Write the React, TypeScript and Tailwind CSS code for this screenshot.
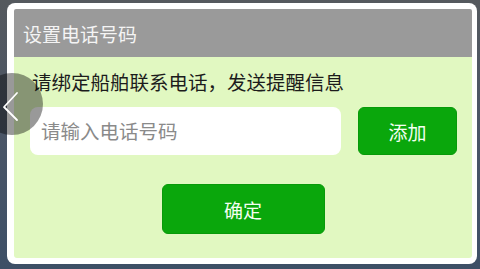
const cjk = { fontFamily: '"Noto Sans CJK SC", "Noto Sans", sans-serif' };

export default function App() {
    return (
        <div
            className="relative w-[480px] h-[269px] overflow-hidden bg-gradient-to-b from-[#55595e] via-[#4a5566] to-[#3d4f66] pt-[3px] pl-[7px]"
            style={cjk}
        >
            {/* Dialog */}
            <div className="w-[470px] h-[261px] bg-white rounded-[8px] pt-[6px] pl-[7px] pr-[5px] pb-[6px] flex flex-col">
                {/* Header */}
                <div className="h-[48px] bg-[#9a9a9a] flex items-center pl-[9px] rounded-t-[2px]">
                    <span className="text-[19px] leading-none text-[#f4f4f4]">设置电话号码</span>
                </div>

                {/* Body */}
                <div className="flex-1 bg-[#e1f8c1] rounded-b-[3px] flex flex-col pt-[13px]">
                    <div className="pl-[18px] text-[19.5px] leading-[24px] text-[#1c1c1c]">
                        请绑定船舶联系电话，发送提醒信息
                    </div>

                    <div className="flex items-center gap-[17px] pl-[16px] mt-[13px] h-[48px]">
                        <div className="w-[311px] h-[48px] bg-white rounded-[8px] flex items-center pl-[11px]">
                            <span className="text-[19.5px] leading-none text-[#8a8a8a]">请输入电话号码</span>
                        </div>
                        <button className="w-[99px] h-[48px] bg-[#0aa70c] border border-[#089a0a] rounded-[6px] text-[19px] leading-none text-[#f4fff2]">
                            添加
                        </button>
                    </div>

                    <div className="flex justify-center mt-[29px]">
                        <button className="w-[163px] h-[50px] bg-[#0aa70c] border border-[#089a0a] rounded-[6px] text-[19px] leading-none text-[#f4fff2]">
                            确定
                        </button>
                    </div>
                </div>
            </div>

            {/* Back overlay on the left edge */}
            <div className="absolute left-[-19px] top-[73px] w-[62px] h-[62px] rounded-full bg-black/40">
                <svg width="62" height="62" viewBox="0 0 62 62" fill="none">
                    <polyline
                        points="36,20 23,34 36,47"
                        stroke="white"
                        strokeWidth="1.8"
                        strokeLinecap="round"
                        strokeLinejoin="round"
                    />
                </svg>
            </div>
        </div>
    );
}
